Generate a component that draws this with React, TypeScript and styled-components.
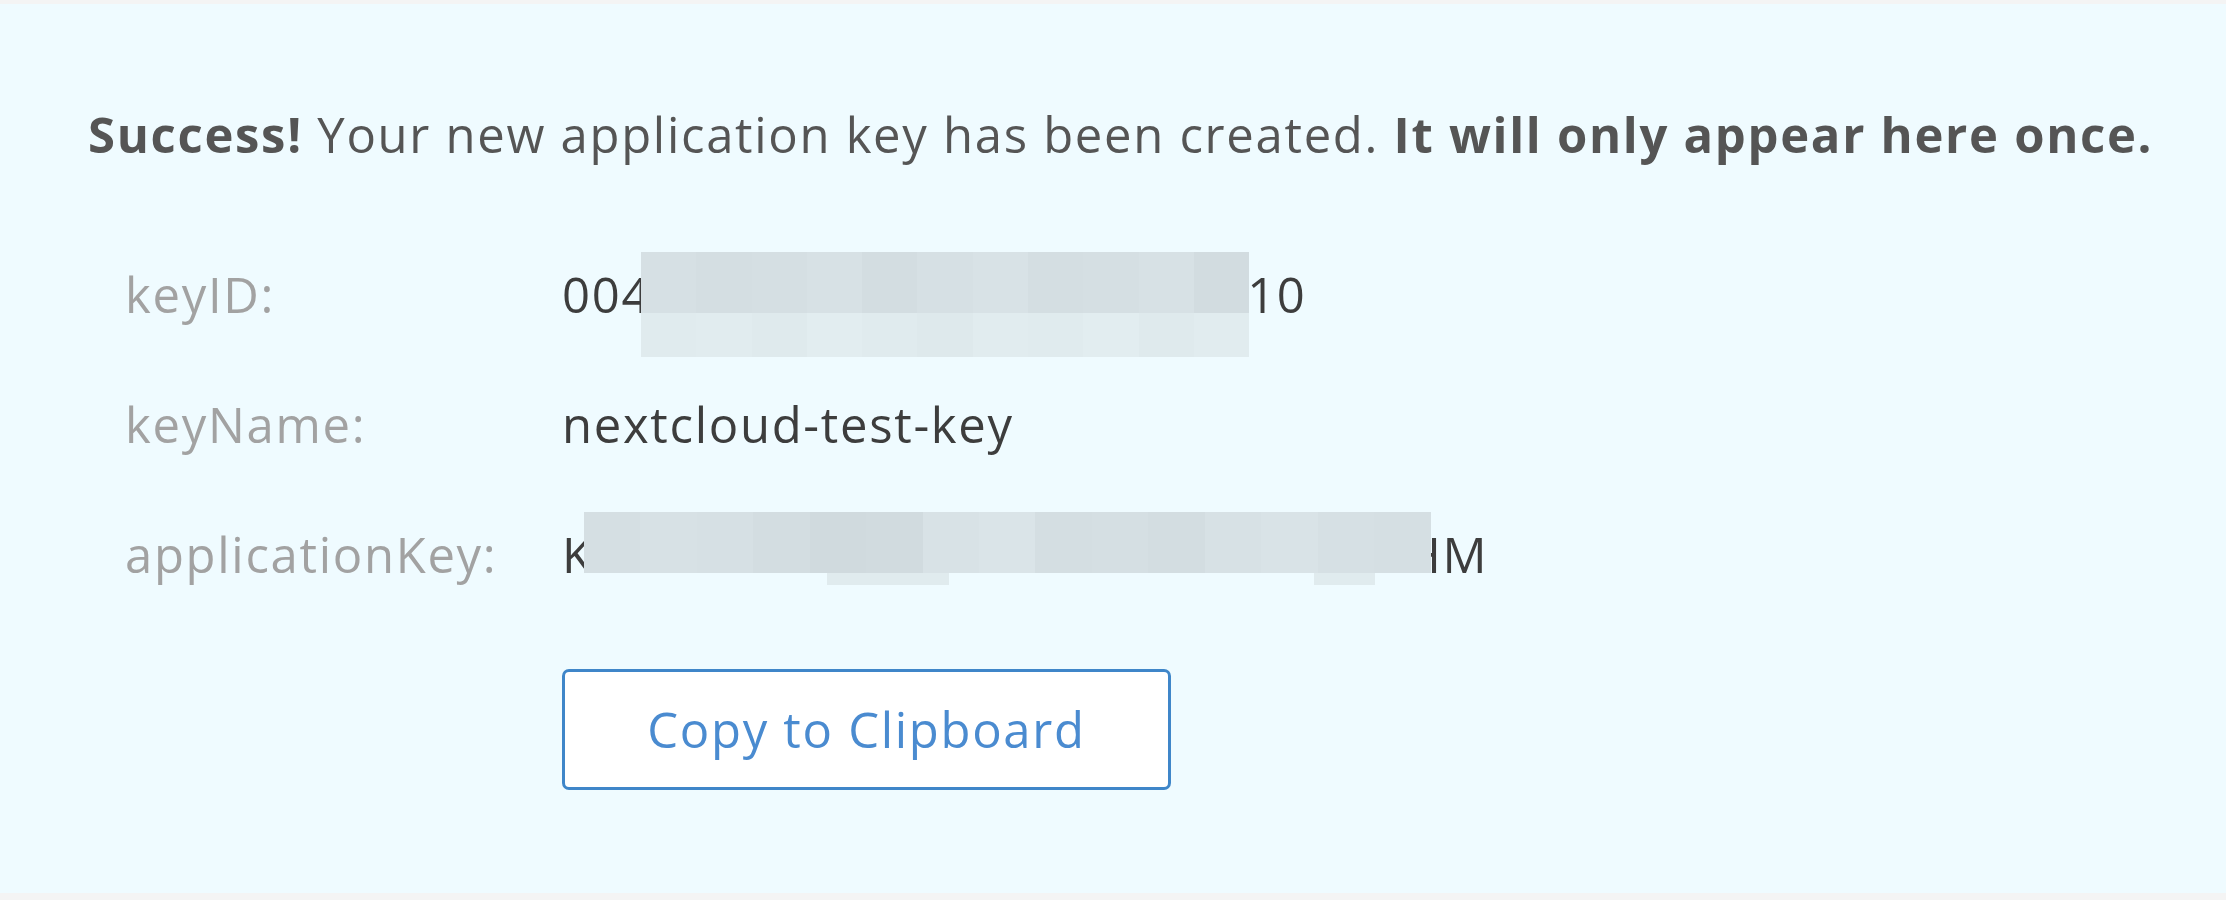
import React, { FunctionComponent } from "react";
import styled, { createGlobalStyle } from "styled-components";

// GLOBAL //
const GlobalStyle = createGlobalStyle`
    html, body {
        margin: 0;
        padding: 0;
        background: #f4f4f4;
    }
    body {
        font-family: "Open Sans", "Liberation Sans", sans-serif;
    }
`;

type TSRow = {
    height: number,
    base: [number, number, number],
    offsets: number[]
}

type TSMaskProps = {
    width: number,
    above: number,
    below: number,
    rows: TSRow[],
    overlapLeft?: number,
    overlapRight?: number,
    drips?: { left: number, width: number }[]
}

// pixelated redaction drawn over the secret part of a value
const Mask: FunctionComponent<TSMaskProps> = (props) => {
    const cols = Math.ceil(props.width / 60);
    return (
        <MaskBox
            $w={props.width}
            $above={props.above}
            $below={props.below}
            $ml={props.overlapLeft || 0}
            $mr={props.overlapRight || 0}
        >
            {props.rows.map((row, r) => (
                <MaskRow key={r} $h={row.height}>
                    {Array.from({ length: cols }).map((_, c) => {
                        const o = row.offsets[c % row.offsets.length];
                        const [red, green, blue] = row.base;
                        return (
                            <MaskCell
                                key={c}
                                style={{ background: `rgb(${red + o},${green + o},${blue + o})` }}
                            />
                        );
                    })}
                </MaskRow>
            ))}
            {props.drips?.map((d, i) => (
                <Drip key={i} style={{ left: d.left, width: d.width }} />
            ))}
        </MaskBox>
    );
};

const App: FunctionComponent = () => {
    return (
        <>
            <GlobalStyle />
            <Page>
                <Panel>
                    <Message>
                        <strong>Success!</strong> Your new application key has been created.{" "}
                        <strong>It will only appear here once.</strong>
                    </Message>
                    <KeyTable>
                        <Label>keyID:</Label>
                        <Value>
                            004
                            <Mask
                                width={608}
                                above={69}
                                below={36}
                                overlapLeft={10}
                                overlapRight={2}
                                rows={[
                                    { height: 61, base: [213, 223, 227], offsets: [1, -1, 0, 2, -2, 1, 3, -1, 0, 2, -3] },
                                    { height: 44, base: [224, 235, 238], offsets: [0, 1, -1, 2, 0, -2, 1, 0, 2, -1, 1] },
                                ]}
                            />
                            10
                        </Value>
                        <Label>keyName:</Label>
                        <Value>nextcloud-test-key</Value>
                        <Label>applicationKey:</Label>
                        <Value>
                            K
                            <Mask
                                width={847}
                                above={57}
                                below={4}
                                overlapLeft={10}
                                overlapRight={26}
                                rows={[
                                    { height: 61, base: [211, 221, 225], offsets: [2, 4, 3, 0, -3, -2, 5, 7, 1, 2, 0, 4, 6, 3, 2] },
                                ]}
                                drips={[
                                    { left: 243, width: 122 },
                                    { left: 730, width: 61 },
                                ]}
                            />
                            HM
                        </Value>
                    </KeyTable>
                    <CopyButton>Copy to Clipboard</CopyButton>
                </Panel>
            </Page>
        </>
    );
};

// STYLED COMPONENTS //
const Page = styled.div`
    height: 900px;
    box-sizing: border-box;
    padding: 4px 0 7px;
`;
const Panel = styled.div`
    height: 100%;
    box-sizing: border-box;
    background: #effbff;
    padding: 98px 0 0 88px;
    display: flex;
    flex-direction: column;
    align-items: flex-start;
    font-size: 49px;
    line-height: 65px;
    letter-spacing: 1.7px;
`;
const Message = styled.div`
    color: #555;
    white-space: nowrap;
    strong {
        font-weight: 700;
    }
`;
const KeyTable = styled.div`
    margin: 62px 0 0 37px;
    display: grid;
    grid-template-columns: 437px auto;
    grid-auto-rows: 130px;
    align-items: center;
`;
const Label = styled.div`
    color: #a2a2a2;
`;
const Value = styled.div`
    color: #3d3d3d;
    white-space: nowrap;
`;
const MaskBox = styled.span<{ $w: number, $above: number, $below: number, $ml: number, $mr: number }>`
    position: relative;
    z-index: 1;
    display: inline-flex;
    flex-direction: column;
    vertical-align: baseline;
    width: ${(p) => p.$w}px;
    height: ${(p) => p.$above + p.$below}px;
    margin: -${(p) => p.$above}px -${(p) => p.$mr}px -${(p) => p.$below}px -${(p) => p.$ml}px;
`;
const MaskRow = styled.span<{ $h: number }>`
    display: flex;
    height: ${(p) => p.$h}px;
`;
const MaskCell = styled.span`
    flex: 1 1 0;
`;
const Drip = styled.span`
    position: absolute;
    top: 100%;
    height: 12px;
    background: rgb(224, 235, 238);
`;
const CopyButton = styled.button`
    margin: 50px 0 0 474px;
    width: 609px;
    height: 121px;
    box-sizing: border-box;
    border: 3px solid #3f86c9;
    border-radius: 7px;
    background: #fff;
    color: #4a8bd0;
    font-family: "Open Sans", "Liberation Sans", sans-serif;
    font-size: 49px;
    line-height: 65px;
    letter-spacing: 1.7px;
    padding: 0;
    cursor: pointer;
`;

export default App;
